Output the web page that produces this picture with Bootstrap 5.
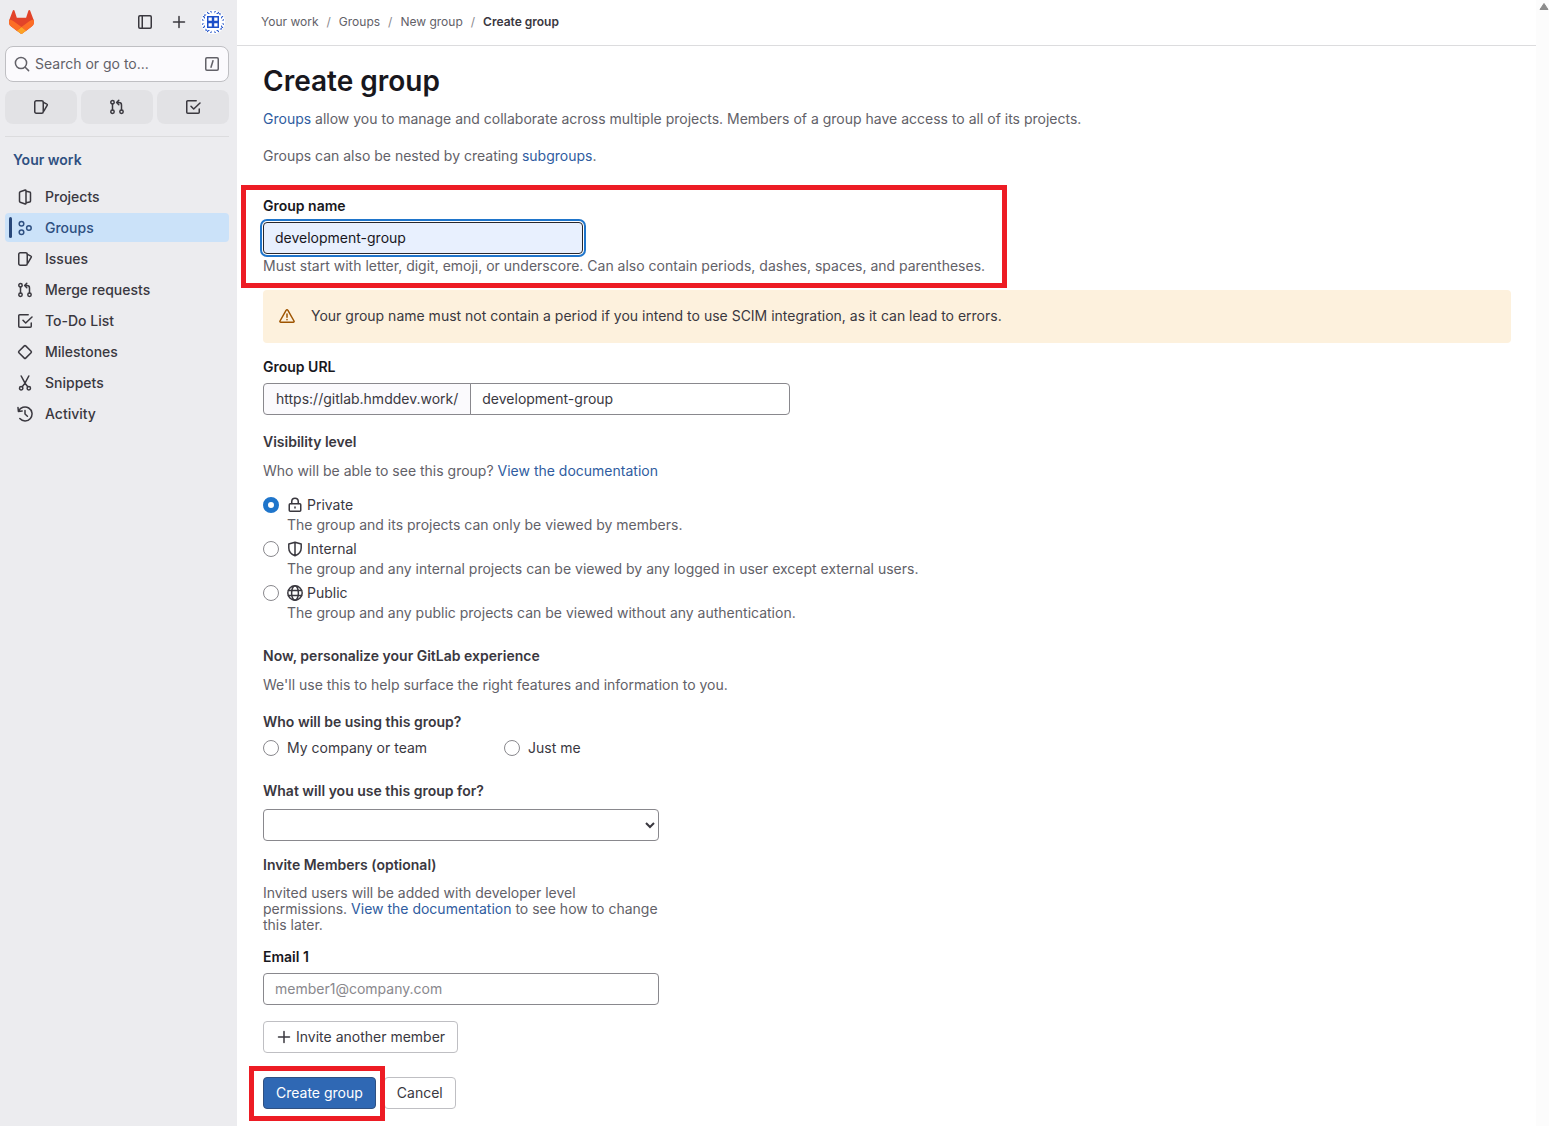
<!DOCTYPE html>
<html lang="en">
<head>
<meta charset="utf-8">
<meta name="viewport" content="width=device-width, initial-scale=1">
<title>Create group · GitLab</title>
<link href="https://cdn.jsdelivr.net/npm/bootstrap@5.3.0/dist/css/bootstrap.min.css" rel="stylesheet">
<style>
  :root { --ink: #3a383f; --ink-strong: #18171d; --ink-soft: #626168; --link: #2f5ca0; --line: #89888d; }
  body { font-family: Inter, "Liberation Sans", sans-serif; font-size: 14px; line-height: 20px; color: var(--ink); background: #fff; }
  a { color: var(--link); text-decoration: none; }
  p { color: var(--ink-soft); margin: 0; }
  svg { display: block; flex: none; }
  .ico { width: 16px; height: 16px; fill: none; stroke: currentColor; stroke-width: 1.5; stroke-linejoin: round; stroke-linecap: round; }

  /* sidebar */
  .side { width: 237px; background: #ececef; padding: 0 8px 0 5px; }
  .side-top { height: 46px; padding: 0 4px 2px 4px; }
  .tool-pair { gap: 18px; }
  .top-tools { gap: 14px; }
  .icon-btn { border: 0; background: none; padding: 0; color: var(--ink); }
  .search-btn { height: 36px; border: 1px solid #bfbfc3; border-radius: 8px; background: #fbfafd; color: var(--ink-soft); padding: 0 8px; gap: 5px; }
  .quick { height: 34px; border-radius: 8px; background: #e2e2e5; color: var(--ink); }
  .side hr { margin: 12px 0 13px; opacity: 1; border-color: #dcdcde; }
  .side-title { font-size: 14px; line-height: 20px; font-weight: 600; color: #2f5081; padding-left: 8px; margin: 0 0 12px; }
  .side-nav { gap: 2px; }
  .side-link { position: relative; height: 29px; border-radius: 4px; padding-left: 12px; gap: 12px; color: var(--ink); font-weight: 500; }
  .side-link.active { background: #cbe2f9; color: #2f5081; }
  .side-link.active::before { content: ""; position: absolute; left: 4px; top: 4px; bottom: 4px; width: 3px; border-radius: 2px; background: #284779; }

  /* main column */
  .crumbs { height: 46px; border-bottom: 1px solid #dcdcde; padding: 0 24px 2px; font-size: 12px; }
  .crumbs .breadcrumb-item { line-height: 16px; }
  .crumbs .breadcrumb-item a { color: var(--ink-soft); }
  .crumbs .breadcrumb-item.active { color: var(--ink); font-weight: 600; }
  .crumbs .breadcrumb-item + .breadcrumb-item { padding-left: 8px; }
  .crumbs .breadcrumb-item + .breadcrumb-item::before { padding-right: 8px; color: #89888d; font-weight: 400; }
  .page { padding: 17px 25px 17px 26px; }
  .page h1 { font-size: 28px; line-height: 36px; font-weight: 600; color: var(--ink-strong); margin: 0 0 10px; }
  .intro + .intro { margin-top: 17px; }
  .title { display: block; font-size: 14px; line-height: 20px; font-weight: 600; color: var(--ink); margin: 0; }
  .title.strong { color: var(--ink-strong); margin-bottom: 6px; }
  .title.after-field { margin-top: 17px; }
  .title.new-part { margin-top: 23px; }
  .title.after-select { margin-top: 14px; }
  .title + .about { margin: 9px 0 17px; }
  .title + .about.before-choices { margin-bottom: 14px; }
  .field { height: 32px; font-size: 14px; line-height: 20px; padding: 0 11px 1px; border: 1px solid var(--line); border-radius: 4px; color: var(--ink); background-color: #fff; }
  .field::placeholder { color: #89888d; }
  .field-focus { width: 320px; border-color: #28272d; background-color: #e8f0fe; color: #18171d; box-shadow: 0 0 0 1px #fff, 0 0 0 3px #1f75cb; }
  .url-group { width: 527px; }
  .url-group .field-prefix { background: #fbfafd; padding: 0 12px; }
  .narrow { width: 396px; }
  .select-field { appearance: auto; padding: 0 4px; }
  .name-part { display: table; margin-top: 30px; }
  .name-part p { margin-top: 2px; }
  .scim { background: #fdf1dd; border-radius: 4px; color: var(--ink); padding: 16px 16px 17px; gap: 16px; margin: 14px 0; }
  .scim svg { color: #9e5400; }
  .choice { display: grid; grid-template-columns: 16px auto; column-gap: 8px; margin: 0; padding: 0; min-height: 20px; }
  .choice .form-check-input { width: 16px; height: 16px; margin: 2px 0; float: none; border: 1px solid var(--line); }
  .choice .form-check-input:checked { border: 5px solid #1f75cb; background: #fff; }
  .choice label { display: flex; align-items: center; gap: 4px; }
  .choice p { grid-column: 2; }
  .who { column-gap: 77px; margin-top: 6px; }
  .invite-note { line-height: 16px; margin: 10px 0 14px; }
  .page .btn { height: 32px; padding: 0 12px; font-size: 14px; line-height: 20px; border-radius: 4px; border: 1px solid #bfbfc3; color: var(--ink); background: #fff; }
  .page .btn.submit { background: #2f68b4; border-color: #2f5081; color: #fff; }
  .marked { position: relative; }
  .marked::after { content: ""; position: absolute; border: 5px solid #ed1c24; pointer-events: none; }
  .mark-name::after { inset: -11px -22px -12px -22px; }
  .mark-submit::after { inset: -11px -9px -12px -14px; z-index: 1; }
  .rail { width: 13px; background: #fcfcfc; padding-top: 3px; }
</style>
<script src="https://cdn.jsdelivr.net/npm/bootstrap@5.3.0/dist/js/bootstrap.bundle.min.js"></script>
</head>
<body>
<svg width="0" height="0" class="position-absolute" aria-hidden="true">
  <symbol id="i-issues" viewBox="0 0 16 16"><rect x="1.75" y="1.75" width="8.5" height="12.5" rx="1.5"/><path d="M10.5 3.4l3.4 1.8a.7.7 0 0 1 .4.9L10.8 12.2"/></symbol>
  <symbol id="i-merge" viewBox="0 0 16 16"><circle cx="3.5" cy="3.2" r="1.7"/><circle cx="3.5" cy="12.8" r="1.7"/><circle cx="12.5" cy="12.8" r="1.7"/><path d="M3.5 5v6M12.5 11V6a2.5 2.5 0 0 0-2.5-2.5H8M9.8 1.2L7.6 3.5l2.2 2.2"/></symbol>
  <symbol id="i-todo" viewBox="0 0 16 16"><path d="M11.2 1.75H2.75a1 1 0 0 0-1 1v10.5a1 1 0 0 0 1 1h10.5a1 1 0 0 0 1-1V10M6 7.2L8.7 10l6.3-6"/></symbol>
  <symbol id="i-plus" viewBox="0 0 16 16"><path d="M8 2.5v11M2.5 8h11"/></symbol>
</svg>

<div class="d-flex min-vh-100">
  <aside class="side flex-shrink-0">
    <div class="side-top d-flex align-items-center justify-content-between">
      <a href="#" aria-label="Homepage">
        <svg width="25" height="24" viewBox="0 0 25 24">
          <path d="m24.507 9.5-.034-.09L21.082.562a.896.896 0 0 0-1.694.091l-2.29 7.01H7.825L5.535.653a.898.898 0 0 0-1.694-.09L.451 9.411.416 9.5a6.297 6.297 0 0 0 2.09 7.278l.012.01.03.022 5.16 3.867 2.56 1.935 1.554 1.176a1.051 1.051 0 0 0 1.268 0l1.555-1.176 2.56-1.935 5.197-3.89.014-.01A6.297 6.297 0 0 0 24.507 9.5Z" fill="#E24329"/>
          <path d="m24.507 9.5-.034-.09a11.44 11.44 0 0 0-4.56 2.051l-7.447 5.632 4.742 3.584 5.197-3.89.014-.01A6.297 6.297 0 0 0 24.507 9.5Z" fill="#FC6D26"/>
          <path d="m7.707 20.677 2.56 1.935 1.555 1.176a1.051 1.051 0 0 0 1.268 0l1.555-1.176 2.56-1.935-4.743-3.584-4.755 3.584Z" fill="#FCA326"/>
          <path d="M5.01 11.461a11.43 11.43 0 0 0-4.56-2.05L.416 9.5a6.297 6.297 0 0 0 2.09 7.278l.012.01.03.022 5.16 3.867 4.745-3.584-7.444-5.632Z" fill="#FC6D26"/>
        </svg>
      </a>
      <div class="top-tools d-flex align-items-center">
        <div class="tool-pair d-flex align-items-center">
          <button class="icon-btn" type="button" aria-label="Hide sidebar"><svg class="ico" viewBox="0 0 16 16"><rect x="1.75" y="1.75" width="12.5" height="12.5" rx="1.2"/><path d="M5.25 2v12"/></svg></button>
          <button class="icon-btn" type="button" aria-label="Create new"><svg class="ico"><use href="#i-plus"/></svg></button>
        </div>
        <button class="icon-btn" type="button" aria-label="User menu">
          <svg width="24" height="24" viewBox="0 0 24 24"><defs><clipPath id="round"><circle cx="12" cy="12" r="12"/></clipPath></defs>
            <g clip-path="url(#round)"><path fill="#fff" d="M0 0h24v24H0z"/>
              <path fill="#1d4fc9" d="M6 6h12v12H6z"/><path fill="#fff" d="M7.5 7.5h3.300v3.300H7.500zM13.200 7.500h3.300v3.300h-3.300zM7.500 13.200h3.300v3.300H7.500zM13.200 13.200h3.300v3.300h-3.300z"/>
              <g id="edge" fill="#1d4fc9"><path d="M6 1.500l3 2.500H7.500L6 3zM9 1h1.500v2.500zM15 1h-1.500v2.500zM18 1.500L15 4h1.500L18 3zM3 4.500h2.500L3.500 6.500z"/></g>
              <use href="#edge" transform="rotate(90 12 12)"/><use href="#edge" transform="rotate(180 12 12)"/><use href="#edge" transform="rotate(270 12 12)"/>
            </g></svg>
        </button>
      </div>
    </div>
    <button class="search-btn w-100 d-flex align-items-center" type="button">
      <svg class="ico" viewBox="0 0 16 16"><circle cx="7" cy="7" r="5.6"/><path d="M11.2 11.2l3.4 3.4"/></svg>
      <span>Search or go to...</span>
      <svg class="ico ms-auto" viewBox="0 0 16 16"><rect x="1.75" y="1.75" width="12.5" height="12.5" rx="1.2"/><path d="M9 4.8L7 11.2"/></svg>
    </button>
    <div class="d-flex gap-1 mt-2">
      <a class="quick flex-fill d-flex align-items-center justify-content-center" href="#" aria-label="Issues"><svg class="ico"><use href="#i-issues"/></svg></a>
      <a class="quick flex-fill d-flex align-items-center justify-content-center" href="#" aria-label="Merge requests"><svg class="ico"><use href="#i-merge"/></svg></a>
      <a class="quick flex-fill d-flex align-items-center justify-content-center" href="#" aria-label="To-Do List"><svg class="ico"><use href="#i-todo"/></svg></a>
    </div>
    <hr>
    <h2 class="side-title">Your work</h2>
    <nav class="side-nav d-flex flex-column" aria-label="Your work">
      <a class="side-link d-flex align-items-center" href="#"><svg class="ico" viewBox="0 0 16 16"><path d="M8.2 1L3.2 2.7a1 1 0 0 0-.7 1v8.600a1 1 0 0 0 .7 1l5 1.700a.6.6 0 0 0 .8-.6V1.600a.6.6 0 0 0-.8-.6zM9.200 2.200l3.500.8a1 1 0 0 1 .8 1v8a1 1 0 0 1-.8 1l-3.500.8"/></svg>Projects</a>
      <a class="side-link active d-flex align-items-center" href="#" aria-current="page"><svg class="ico" viewBox="0 0 16 16"><circle cx="4.5" cy="3.8" r="2.3"/><circle cx="4.5" cy="12.2" r="2.3"/><circle cx="11.9" cy="8" r="2.3"/></svg>Groups</a>
      <a class="side-link d-flex align-items-center" href="#"><svg class="ico"><use href="#i-issues"/></svg>Issues</a>
      <a class="side-link d-flex align-items-center" href="#"><svg class="ico"><use href="#i-merge"/></svg>Merge requests</a>
      <a class="side-link d-flex align-items-center" href="#"><svg class="ico"><use href="#i-todo"/></svg>To-Do List</a>
      <a class="side-link d-flex align-items-center" href="#"><svg class="ico" viewBox="0 0 16 16"><path d="M7.3 1.9L1.9 7.3a1 1 0 0 0 0 1.4l5.4 5.4a1 1 0 0 0 1.4 0l5.4-5.4a1 1 0 0 0 0-1.4L8.7 1.9a1 1 0 0 0-1.4 0z"/></svg>Milestones</a>
      <a class="side-link d-flex align-items-center" href="#"><svg class="ico" viewBox="0 0 16 16"><circle cx="4.2" cy="13.2" r="1.7"/><circle cx="11.8" cy="13.2" r="1.7"/><path d="M4.2 1L8 8.2l2.8 3.6M11.8 1L8 8.2l-2.8 3.6"/></svg>Snippets</a>
      <a class="side-link d-flex align-items-center" href="#"><svg class="ico" viewBox="0 0 16 16"><path d="M1.6 5.2A7 7 0 1 1 2.8 12.6M1 1.6l.4 3.8 3.8-.4M8 4.5V8l2.4 2.2"/></svg>Activity</a>
    </nav>
  </aside>

  <main class="flex-grow-1">
    <nav class="crumbs d-flex align-items-center" aria-label="Breadcrumb">
      <ol class="breadcrumb m-0">
        <li class="breadcrumb-item"><a href="#">Your work</a></li>
        <li class="breadcrumb-item"><a href="#">Groups</a></li>
        <li class="breadcrumb-item"><a href="#">New group</a></li>
        <li class="breadcrumb-item active" aria-current="page">Create group</li>
      </ol>
    </nav>
    <form class="page">
      <h1>Create group</h1>
      <p class="intro"><a href="#">Groups</a> allow you to manage and collaborate across multiple projects. Members of a group have access to all of its projects.</p>
      <p class="intro">Groups can also be nested by creating <a href="#">subgroups</a>.</p>

      <div class="name-part marked mark-name">
        <label class="title strong" for="name">Group name</label>
        <input class="form-control field field-focus" id="name" type="text" value="development-group">
        <p>Must start with letter, digit, emoji, or underscore. Can also contain periods, dashes, spaces, and parentheses.</p>
      </div>

      <div class="scim d-flex align-items-center" role="alert">
        <svg class="ico" viewBox="0 0 16 16"><path d="M7.2 2.2L1 13a.9.9 0 0 0 .8 1.3h12.4A.9.9 0 0 0 15 13L8.8 2.2a.9.9 0 0 0-1.6 0zM8 6v3.2M8 11.4v.3"/></svg>
        <span>Your group name must not contain a period if you intend to use SCIM integration, as it can lead to errors.</span>
      </div>

      <label class="title strong" for="url">Group URL</label>
      <div class="input-group url-group">
        <span class="input-group-text field field-prefix">https://gitlab.hmddev.work/</span>
        <input class="form-control field" id="url" type="text" value="development-group">
      </div>

      <h2 class="title after-field">Visibility level</h2>
      <p class="about before-choices">Who will be able to see this group? <a href="#">View the documentation</a></p>
      <div class="d-flex flex-column gap-1">
        <div class="form-check choice">
          <input class="form-check-input" type="radio" name="vis" id="v1" checked>
          <label for="v1"><svg class="ico" viewBox="0 0 16 16"><rect x="2.25" y="6.75" width="11.5" height="7.5" rx="1"/><path d="M4.75 6.5V4.5a3.25 3.25 0 0 1 6.5 0v2M8 10v1"/></svg>Private</label>
          <p>The group and its projects can only be viewed by members.</p>
        </div>
        <div class="form-check choice">
          <input class="form-check-input" type="radio" name="vis" id="v2">
          <label for="v2"><svg class="ico" viewBox="0 0 16 16"><path d="M8 1.2L1.8 3v4c0 4 3 6.5 6.2 7.8 3.2-1.3 6.2-3.8 6.2-7.8V3zM8 1.2v13.6"/></svg>Internal</label>
          <p>The group and any internal projects can be viewed by any logged in user except external users.</p>
        </div>
        <div class="form-check choice">
          <input class="form-check-input" type="radio" name="vis" id="v3">
          <label for="v3"><svg class="ico" viewBox="0 0 16 16"><circle cx="8" cy="8" r="7.2"/><ellipse cx="8" cy="8" rx="3.4" ry="7.2"/><path d="M1.5 5.5h13M1.5 10.5h13"/></svg>Public</label>
          <p>The group and any public projects can be viewed without any authentication.</p>
        </div>
      </div>

      <h2 class="title new-part">Now, personalize your GitLab experience</h2>
      <p class="about">We'll use this to help surface the right features and information to you.</p>

      <h2 class="title">Who will be using this group?</h2>
      <div class="d-flex who">
        <div class="form-check choice"><input class="form-check-input" type="radio" name="who" id="w1"><label for="w1">My company or team</label></div>
        <div class="form-check choice"><input class="form-check-input" type="radio" name="who" id="w2"><label for="w2">Just me</label></div>
      </div>

      <label class="title new-part mb-2" for="purpose">What will you use this group for?</label>
      <select class="field select-field narrow d-block" id="purpose"><option></option></select>

      <h2 class="title after-select">Invite Members (optional)</h2>
      <p class="invite-note narrow">Invited users will be added with developer level permissions. <a href="#">View the documentation</a> to see how to change this later.</p>

      <label class="title strong" for="mail">Email 1</label>
      <input class="form-control field narrow" id="mail" type="email" placeholder="member1@company.com">
      <button class="btn d-flex align-items-center gap-1 mt-3" type="button"><svg class="ico"><use href="#i-plus"/></svg>Invite another member</button>

      <div class="d-flex gap-2 mt-4">
        <span class="marked mark-submit"><button class="btn submit d-block" type="submit">Create group</button></span>
        <button class="btn" type="button">Cancel</button>
      </div>
    </form>
  </main>

  <div class="rail flex-shrink-0" aria-hidden="true">
    <svg class="ms-auto" width="10" height="7" viewBox="0 0 10 7"><path d="M1 6.5L5 .5l4 6z" fill="#8b8b8b" stroke="#8b8b8b" stroke-linejoin="round"/></svg>
  </div>
</div>
</body>
</html>
